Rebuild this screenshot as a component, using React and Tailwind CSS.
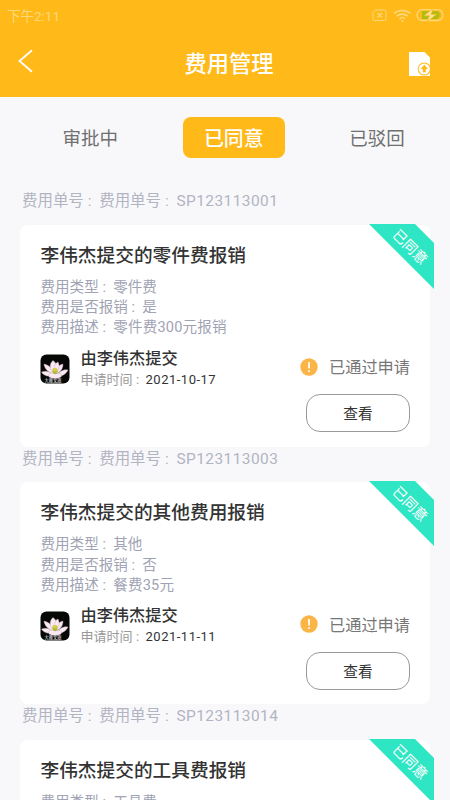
const records = [
  { id: 'SP123113001', title: '李伟杰提交的零件费报销', type: '零件费', paid: '是', desc: '零件费300元报销', date: '2021-10-17' },
  { id: 'SP123113003', title: '李伟杰提交的其他费用报销', type: '其他', paid: '否', desc: '餐费35元', date: '2021-11-11' },
  { id: 'SP123113014', title: '李伟杰提交的工具费报销', type: '工具费', paid: '是', desc: '工具费', date: '2021-11-12' },
];

function StatusBar() {
  return (
    <div className="flex h-8 items-center justify-between pl-[7px] pr-[6px] text-[#ffd97a]">
      <span className="pt-px text-[13.500px] leading-none">下午2:11</span>
      <svg width="78" height="16" viewBox="0 0 78 16" fill="none" stroke="currentColor">
        <path d="M9.500 2h9a1.500 1.500 0 0 1 1.500 1.500v7.500a1.500 1.500 0 0 1-1.500 1.500h-10A1.500 1.500 0 0 1 7 11V4.500z" />
        <path d="M11.500 5l4.500 4.500M16 5l-4.500 4.500" strokeWidth="1.300" />
        <path d="M28 5.500c4.500-4 12-4 16.500 0M30.800 8.200c3.200-2.800 7.700-2.800 10.900 0M33.500 10.800c1.700-1.500 4-1.500 5.500 0" strokeWidth="1.600" />
        <circle cx="36.300" cy="12.800" r="1.100" fill="currentColor" stroke="none" />
        <rect x="51" y="1.700" width="26" height="10.800" rx="5.400" strokeWidth="1.300" />
        <path d="M56 3.300h15a4 4 0 0 1 0 7.600H56z" fill="#a9bf14" stroke="none" />
        <path d="M67.500 0L58 7.800h5.500L60.500 14.200 70.500 6.300h-5.500z" fill="#ffe29a" stroke="#ffb919" strokeWidth=".8" />
      </svg>
    </div>
  );
}

function Header() {
  return (
    <header className="h-[97px] bg-[#ffb919]">
      <StatusBar />
      <div className="flex h-[63px] items-center justify-between pl-[18px] pr-[19px] text-white">
        <svg width="16" height="24" viewBox="0 0 16 24" fill="none" stroke="currentColor" strokeWidth="1.800" className="mb-[5px]">
          <path d="M14 1.200L1.500 12 14 22.800" />
        </svg>
        <h1 className="pl-[16px] pt-[2px] text-[22.300px] font-medium leading-none">费用管理</h1>
        <svg width="23" height="26" viewBox="0 0 23 26">
          <path d="M1 1h15.500l5.500 5.500V25H1z" fill="currentColor" />
          <circle cx="16.300" cy="18" r="6.600" fill="#ffb919" />
          <circle cx="16.300" cy="18" r="4.900" fill="#ffb919" stroke="currentColor" strokeWidth="1.400" />
          <circle cx="16.300" cy="18" r="4.800" fill="currentColor" />
          <path d="M16.300 13.800l3.800 4.200h-2.300v3.300h-3V18h-2.300z" fill="#ffb919" />
        </svg>
      </div>
    </header>
  );
}

function Tabs() {
  return (
    <nav className="mt-5 flex h-[41px] items-center text-[18.500px] text-[#707070]">
      <span className="w-[182.500px] pr-0.5 pt-1 text-center">审批中</span>
      <span className="flex h-[41px] w-[102.500px] items-center justify-center rounded-lg bg-[#ffb919] pt-1 text-[19.900px] font-medium text-white">已同意</span>
      <span className="flex-1 pl-[19px] pt-1 text-center">已驳回</span>
    </nav>
  );
}

function Colon() {
  return <span className="inline-block w-[1em] pl-[0.260em] leading-none">:</span>;
}

function Avatar() {
  return (
    <svg width="30" height="30" viewBox="0 0 30 30" className="-ml-[0.500px] mt-[7px] shrink-0">
      <rect x=".500" y=".500" width="29" height="29" rx="6" fill="#060806" />
      <g fill="#f7eaf1" stroke="#c9a1ba" strokeWidth=".4">
        <path d="M13 22C7 23 3 21 1.500 18c5-2 9 0 12 3z" />
        <path d="M16 22c6 1 10-2 12-6-5-1-9 2-12 6z" />
        <path d="M13 20C7 18 4 13 4 10c5 1 9 5 10 10z" />
        <path d="M16 20c5-2 7-6 7-10-5 1-7 5-7 10z" />
        <path d="M12 18C9 13 10 9 13 6.500c4 3 5 7 4 11z" />
        <path d="M15 18c-1-5 0-9 3-10 2 4 1 8-1 10z" />
        <path d="M9 23c-1-4 3-5 6-3 4-2 8 0 6 3-4 2-8 2-12 0z" />
      </g>
      <ellipse cx="15" cy="17" rx="2.600" ry="3" fill="#b6bd38" />
      <ellipse cx="15" cy="15.500" rx="2.600" ry="1.500" fill="#d9d04a" />
      <text x="13" y="28.200" fill="#fff" fontSize="4.200" textAnchor="middle">大雅文旅</text>
    </svg>
  );
}

function Ribbon() {
  return (
    <div className="absolute -right-1 -top-[1px] h-[65px] w-[65px]">
      <svg width="65" height="65" viewBox="0 0 65 65" className="block">
        <path d="M0 0h46l19 19v46z" fill="#2ee6c3" />
      </svg>
      <span className="absolute left-[19px] top-[16px] flex h-[14px] w-[44px] rotate-45 items-center justify-center whitespace-nowrap text-[14.200px] leading-none text-white">已同意</span>
    </div>
  );
}

function Card({ item }) {
  return (
    <section className="h-[257.670px]">
      <p className="h-[35.500px] whitespace-nowrap pl-[22px] text-[15.450px] leading-[25px] text-[#b2b4c2]">
        费用单号<Colon />费用单号<Colon /><span className="tracking-[0.450px]">{item.id}</span>
      </p>
      <div className="relative mx-5 h-[222.170px] rounded-lg bg-white pl-[20.500px] pr-5 pt-[17px]">
        <Ribbon />
        <h2 className="h-[36px] text-[18.700px] font-medium leading-[28px] text-[#333]">{item.title}</h2>
        <div className="text-[14.550px] leading-[20.400px] text-[#9fa3b4]">
          <p>费用类型<Colon />{item.type}</p>
          <p>费用是否报销<Colon />{item.paid}</p>
          <p>费用描述<Colon /><span className="tracking-[0.200px]">{item.desc}</span></p>
        </div>
        <div className="mt-[8px] flex">
          <Avatar />
          <div className="ml-[10.500px]">
            <p className="text-[16.200px] font-medium leading-[23px] text-[#333]">由李伟杰提交</p>
            <p className="whitespace-nowrap text-[13px] leading-[20px] text-[#999]">
              申请时间<Colon /><span className="tracking-[0.500px] text-[#333]">{item.date}</span>
            </p>
          </div>
          <div className="ml-auto flex flex-col items-end">
            <div className="flex h-[25px] items-center pt-[15px] text-[16.200px] text-[#777]">
              <svg width="18" height="18" viewBox="0 0 18 18" className="mr-[11px]">
                <circle cx="9" cy="9" r="8.700" fill="#fbb446" />
                <path d="M9 4v6.500M9 12.200v1.800" stroke="#fff" strokeWidth="1.700" />
              </svg>
              <span className="pt-[3px]">已通过申请</span>
            </div>
            <button className="mt-[22.500px] flex h-[38px] w-[104px] items-center justify-center rounded-[14px] border border-[#999] pt-[2px] text-[14.700px] text-[#333]">查看</button>
          </div>
        </div>
      </div>
    </section>
  );
}

export default function App() {
  return (
    <div className="h-[800px] w-full overflow-hidden bg-[#f8f8fb] font-['Roboto','Noto_Sans_CJK_SC',sans-serif]">
      <Header />
      <Tabs />
      <main className="mt-[31px]">
        {records.map((item) => (
          <Card key={item.id} item={item} />
        ))}
      </main>
    </div>
  );
}
